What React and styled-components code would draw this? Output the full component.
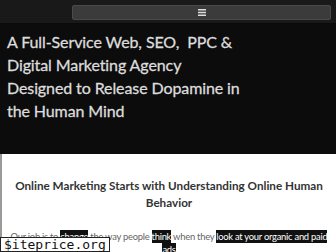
import styled, { createGlobalStyle } from "styled-components";

const Global = createGlobalStyle`
  html, body {
    margin: 0;
    padding: 0;
    background: #ffffff;
    font-family: Lato, "Liberation Sans", sans-serif;
  }
`;

const Page = styled.div`
  width: 336px;
  height: 252px;
  overflow: hidden;
  position: relative;
`;

const Hero = styled.div`
  background: #0c0c0c;
  height: 154px;
`;

const TopBar = styled.div`
  display: flex;
  justify-content: flex-end;
  height: 24px;
  padding: 5px 5px 0 72px;
  box-sizing: border-box;
  background: #191919;
  border-bottom: 1px solid #0a0a0a;
`;

const MenuButton = styled.button`
  flex: 1;
  height: 15px;
  border: 1px solid #4a4a4a;
  border-radius: 2px;
  background: #3b3b3b;
  display: flex;
  align-items: center;
  justify-content: center;
  padding: 0;
`;

const Title = styled.h1`
  margin: 0;
  padding: 6px 7px 0;
  font-size: 16px;
  font-weight: 400;
  line-height: 23px;
  color: #dcdcdc;
  letter-spacing: -0.1px;
  -webkit-text-stroke: 0.3px #dcdcdc;
`;

const Content = styled.div`
  border-left: 2px solid #9a9a9a;
  background: #fff;
  height: 98px;
  padding-top: 23px;
  box-sizing: border-box;
`;

const SubTitle = styled.h2`
  margin: 0 auto;
  width: 320px;
  text-align: center;
  font-size: 11.7px;
  font-weight: 700;
  line-height: 16.5px;
  color: #333;
`;

const Text = styled.p`
  margin: 20px 0 0;
  padding: 0 4px;
  text-align: center;
  font-size: 9.4px;
  line-height: 13px;
  color: #666;
  letter-spacing: -0.25px;
`;

const Mark = styled.span`
  background: #111;
  color: #fff;
  padding: 1px 0;
`;

const Watermark = styled.div`
  position: absolute;
  left: 0;
  bottom: 0;
  padding: 0 3px;
  background: #fff;
  border: 1px solid #222;
  font-family: "DejaVu Sans Mono", monospace;
  font-size: 13px;
  line-height: 13px;
  color: #111;
`;

export default function App() {
  return (
    <Page>
      <Global />
      <Hero>
        <TopBar>
          <MenuButton>
            <svg width="8" height="7" viewBox="0 0 8 7">
              <rect x="0" y="0" width="8" height="1.5" fill="#ddd" />
              <rect x="0" y="2.75" width="8" height="1.5" fill="#ddd" />
              <rect x="0" y="5.5" width="8" height="1.5" fill="#ddd" />
            </svg>
          </MenuButton>
        </TopBar>
        <Title>
          A Full-Service Web, SEO,&nbsp; PPC &amp;
          <br />
          Digital Marketing Agency
          <br />
          Designed to Release Dopamine in
          <br />
          the Human Mind
        </Title>
      </Hero>
      <Content>
        <SubTitle>
          Online Marketing Starts with Understanding Online Human Behavior
        </SubTitle>
        <Text>
          Our job is to <Mark>change</Mark> the way people <Mark>think</Mark>{" "}
          when they <Mark>look at your organic and paid ads</Mark>
        </Text>
      </Content>
      <Watermark>$iteprice.org</Watermark>
    </Page>
  );
}
